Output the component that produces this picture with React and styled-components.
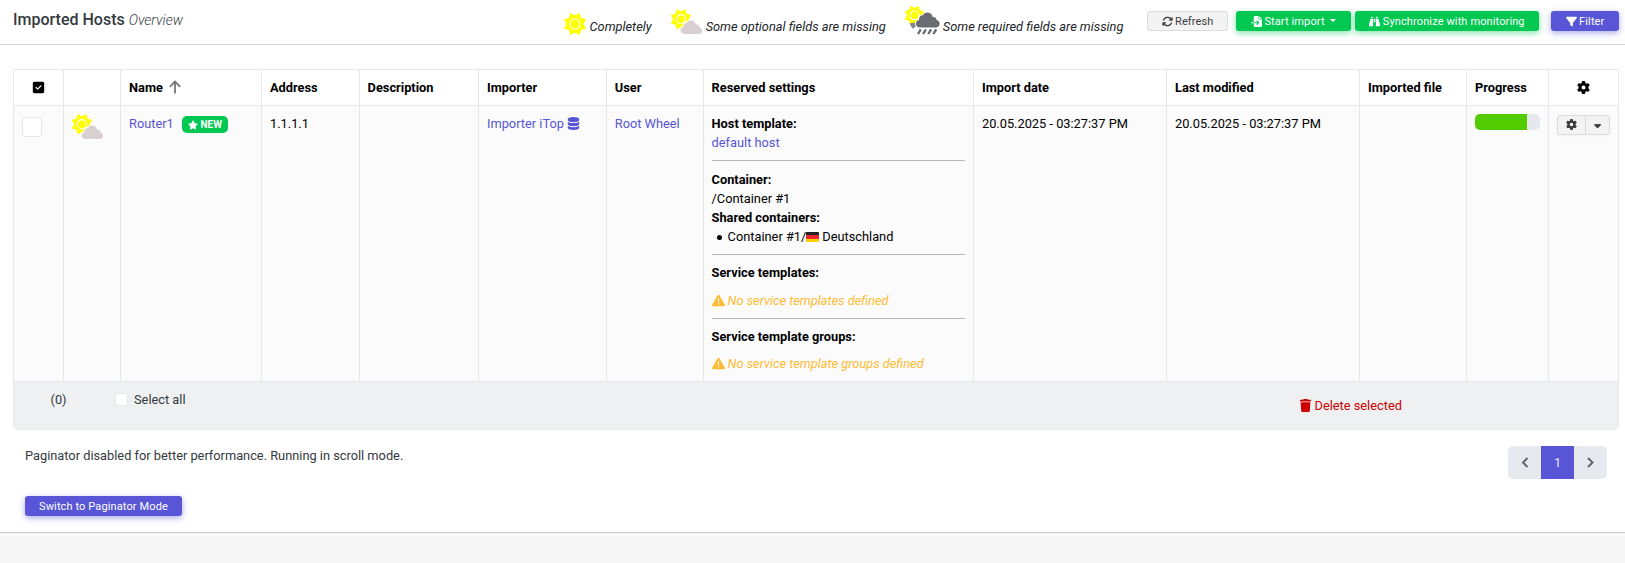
import React from "react";
import styled, { createGlobalStyle, css } from "styled-components";
import {
  FaArrowsRotate, FaFileImport, FaBinoculars, FaFilter, FaGear, FaDatabase,
  FaTrash, FaTriangleExclamation, FaSquareCheck, FaStar, FaCaretDown,
} from "react-icons/fa6";

const GlobalStyle = createGlobalStyle`
  * { box-sizing: border-box; }
  body {
    margin: 0;
    background: #f7f7f7;
    font-family: Roboto, "Liberation Sans", sans-serif;
    font-size: 12.8px;
    line-height: 19px;
    color: #212529;
  }
`;

const Panel = styled.main`
  height: 533px;
  background: #fff;
  border-bottom: 1px solid #c9cacc;
`;

const Header = styled.header`
  display: flex;
  height: 45px;
  padding: 0 6px 0 13px;
  border-bottom: 1px solid #d0d1d3;
`;

const Title = styled.h1`
  flex: 1;
  margin: 9px 0 0;
  font-size: 16px;
  line-height: 21px;
  font-weight: 500;
  color: #343a40;
  small {
    font-size: 14px;
    font-weight: 300;
    font-style: italic;
  }
`;

const Legend = styled.div`
  display: flex;
  align-items: flex-end;
  height: 36px;
  gap: 19px;
  margin-right: 23.6px;
`;

const LegendItem = styled.div`
  display: flex;
  align-items: flex-end;
  gap: 3px;
  font-style: italic;
  color: #212529;
  white-space: nowrap;
  svg { display: block; margin-bottom: 1px; }
`;

const Toolbar = styled.div`
  display: flex;
  margin-top: 11px;
`;

const tones = {
  plain: css`
    background: #f3f3f3;
    color: #3b3b3b;
    border: 1px solid #dcdcdc;
  `,
  green: css`
    background: #00c851;
    color: #fff;
    box-shadow: 0 2px 6px rgba(0, 200, 81, 0.5);
  `,
  violet: css`
    background: #5856d6;
    color: #fff;
    box-shadow: 0 2px 6px rgba(88, 86, 214, 0.5);
  `,
};

const Button = styled.button`
  display: flex;
  align-items: center;
  justify-content: center;
  gap: 2.5px;
  width: ${(p) => p.$width}px;
  height: 20px;
  padding: 1px 0 0;
  margin-left: ${(p) => p.$gap || 0}px;
  border: 0;
  border-radius: 3px;
  font: 400 11px/19px Roboto, sans-serif;
  letter-spacing: 0.12px;
  white-space: nowrap;
  ${(p) => tones[p.$tone]}
  svg { height: 11px; width: auto; flex: none; }
`;

const MiniCaret = styled.i`
  margin-left: 3px;
  margin-top: -2px;
  border: 3px solid transparent;
  border-top-color: currentColor;
  border-bottom: 0;
`;

const Table = styled.section`
  width: 1606px;
  margin: 24px 0 0 13px;
  border: 1px solid #e5e7eb;
  border-radius: 0 0 5px 5px;
  overflow: hidden;
  color: #000;
`;

const Row = styled.div`
  display: grid;
  grid-template-columns: 49px 57px 141px 97.6px 119.4px 127.8px 96.8px 270.4px 193px 193px 107px 82px 70px;
  height: ${(p) => p.$height}px;
  background: ${(p) => (p.$head ? "#fff" : "#fbfbfb")};
  border-bottom: 1px solid #e5e7eb;
  font-weight: ${(p) => (p.$head ? 700 : 400)};
`;

const Cell = styled.div`
  padding: 8px;
  & + & { border-left: 1px solid #e5e7eb; }
  ${(p) => p.$center && css`
    display: flex;
    justify-content: center;
    align-items: center;
  `}
`;

const NameHead = styled.div`
  display: flex;
  gap: 6px;
  svg { margin-top: 2px; }
`;

const Inline = styled.div`
  display: flex;
  align-items: center;
  gap: ${(p) => p.$gap}px;
  white-space: nowrap;
`;

const Link = styled.a`
  color: #5856d6;
`;

const Badge = styled.span`
  display: flex;
  align-items: center;
  justify-content: center;
  gap: 3px;
  width: 46px;
  height: 17px;
  margin-top: 2px;
  border-radius: 5px;
  background: #00c851;
  color: #fff;
  font-size: 10px;
  font-weight: 700;
`;

const Checkbox = styled.span`
  display: block;
  width: ${(p) => p.$size}px;
  height: ${(p) => p.$size}px;
  margin-top: 3px;
  background: #fff;
  border: 1px solid #e5e7eb;
  border-radius: 3px;
`;

const Block = styled.div`
  ${(p) => p.$top && css`
    margin-top: 8px;
    padding-top: ${p.$top}px;
    border-top: 1px solid #b9b9bb;
  `}
`;

const Strong = styled.div`
  font-weight: 700;
`;

const Bullet = styled.div`
  display: flex;
  align-items: center;
  padding-left: 5px;
  &::before {
    content: "";
    width: 5px;
    height: 5px;
    margin: 1px 6px 0 0;
    border-radius: 50%;
    background: #000;
  }
`;

const Flag = styled.i`
  width: 13px;
  height: 10px;
  margin-right: 3px;
  border-radius: 1px;
  background: linear-gradient(#222 0 33%, #e8262c 33% 67%, #ffd000 67%);
`;

const Warning = styled.div`
  display: flex;
  align-items: center;
  gap: 3px;
  margin-top: ${(p) => p.$top}px;
  color: #ffbb33;
  font-style: italic;
  svg { margin-top: -1px; }
`;

const Progress = styled.div`
  width: 65px;
  height: 16px;
  border-radius: 5px;
  overflow: hidden;
  background: #e5e8ed;
`;

const ProgressFill = styled.div`
  width: ${(p) => p.$value}%;
  height: 100%;
  background: #52cc00;
`;

const Split = styled.div`
  display: flex;
  width: 53px;
  height: 20px;
  margin-top: 1px;
  border: 1px solid #dcdcdc;
  border-radius: 3px;
  background: #f3f3f3;
  color: #3b3b3b;
  box-shadow: 0 1px 3px rgba(0, 0, 0, 0.04);
  span {
    flex: 1;
    display: flex;
    align-items: center;
    justify-content: center;
  }
  span:first-child {
    flex: 0 0 28px;
    padding-bottom: 1px;
    border-right: 1px solid #dcdcdc;
  }
`;

const BulkBar = styled.div`
  display: flex;
  height: 47px;
  background: #eff0f2;
  color: #343a40;
`;

const BulkCount = styled.span`
  width: 101px;
  padding: 8px 0 0 36.5px;
`;

const BulkSelect = styled.div`
  display: flex;
  gap: 6px;
  width: 1184px;
  padding-top: 8px;
`;

const BulkDelete = styled.div`
  display: flex;
  gap: 2.5px;
  padding-top: 14px;
  color: #cc0000;
  svg { margin-top: 3px; }
`;

const Footer = styled.footer`
  display: flex;
  justify-content: space-between;
  padding: 16px 18px 0 25px;
`;

const Notice = styled.p`
  margin: 0 0 31px;
  color: #343a40;
`;

const Pager = styled.nav`
  display: flex;
  height: 33px;
  border-radius: 5px;
  overflow: hidden;
`;

const Page = styled.span`
  display: flex;
  align-items: center;
  justify-content: center;
  width: 33px;
  background: ${(p) => (p.$active ? "#5856d6" : "#e6e9ed")};
  color: ${(p) => (p.$active ? "#e6e6ff" : "#666")};
`;

const PagerMode = styled.div`
  white-space: nowrap;
`;

const rayPoints = (cx, cy, outer, inner) =>
  Array.from({ length: 16 }, (_, i) => {
    const r = i % 2 ? inner : outer;
    const a = (Math.PI * (i + 1)) / 8;
    return `${(cx + r * Math.sin(a)).toFixed(2)},${(cy - r * Math.cos(a)).toFixed(2)}`;
  }).join(" ");

const SunShape = ({ cx, cy, r }) => (
  <>
    <polygon points={rayPoints(cx, cy, r, r * 0.7)} fill="#ffff00" stroke="#ffff00" strokeWidth="0.6" strokeLinejoin="round" />
    <circle cx={cx} cy={cy} r={r * 0.43} fill="none" stroke="#fff" strokeWidth="1.1" />
  </>
);

const cloud =
  "M4.2 14 C1.7 14 0.3 12.5 0.3 10.6 C0.3 8.8 1.5 7.6 3.1 7.3 C2.9 4.6 4.6 2.9 6.6 3 C7.6 1.1 9.2 0.4 11 0.5 C13.6 0.6 15.3 2.4 15.5 4.6 C17.6 4.3 19 5.5 19 7.2 C20.8 7.5 21.8 8.8 21.8 10.6 C21.8 12.7 20.4 14 18.4 14 Z";

const Sun = () => (
  <svg width="22.5" height="22" viewBox="0 0 22.5 22"><SunShape cx={11} cy={11} r={11.7} /></svg>
);

const SunCloud = () => (
  <svg width="32" height="26" viewBox="0 0 32 26">
    <SunShape cx={9.9} cy={10.2} r={10.6} />
    <g transform="translate(9.3 11)">
      <path d={cloud} fill="#d8d0d0" stroke="#fff" strokeWidth="2" paintOrder="stroke" />
    </g>
  </svg>
);

const SunRain = () => (
  <svg width="35" height="29" viewBox="0 0 35 29">
    <SunShape cx={9.4} cy={9.4} r={10.2} />
    <path d="M4.5 17.5 L9.5 16.5 L11 20.5 L7.5 22.8 Z" fill="#85868a" />
    <g transform="translate(10.6 6) scale(1.1)">
      <path d={cloud} fill="#6b6c71" stroke="#fff" strokeWidth="1.6" paintOrder="stroke" />
    </g>
    <path d="M15.8 23.4 L13 28 M20.9 23.4 L18.1 28 M26.1 23.4 L23.3 28 M31.2 23.4 L28.4 28" stroke="#6b6c71" strokeWidth="2.4" />
  </svg>
);

const SortArrow = () => (
  <svg width="12" height="14" viewBox="0 0 12 14" fill="none" stroke="#777" strokeWidth="1.8">
    <path d="M6 13.5 V1.5 M0.8 6.8 L6 1.6 L11.2 6.8" />
  </svg>
);

const Chevron = ({ right }) => (
  <svg width="8" height="11" viewBox="0 0 8 11" fill="none" stroke="currentColor" strokeWidth="2">
    <path d={right ? "M1 1 L5.5 5.5 L1 10" : "M6.5 1 L2 5.5 L6.5 10"} />
  </svg>
);

export default function App() {
  return (
    <>
      <GlobalStyle />
      <Panel>
        <Header>
          <Title>Imported Hosts <small>Overview</small></Title>
          <Legend>
            <LegendItem><Sun />Completely</LegendItem>
            <LegendItem><SunCloud />Some optional fields are missing</LegendItem>
            <LegendItem><SunRain />Some required fields are missing</LegendItem>
          </Legend>
          <Toolbar>
            <Button $tone="plain" $width={81}><FaArrowsRotate />Refresh</Button>
            <Button $tone="green" $width={115} $gap={8}><FaFileImport />Start import<MiniCaret /></Button>
            <Button $tone="green" $width={184} $gap={4}><FaBinoculars />Synchronize with monitoring</Button>
            <Button $tone="violet" $width={68} $gap={12}><FaFilter />Filter</Button>
          </Toolbar>
        </Header>

        <Table>
          <Row $head $height={36}>
            <Cell $center><FaSquareCheck size={13} /></Cell>
            <Cell />
            <Cell><NameHead>Name<SortArrow /></NameHead></Cell>
            <Cell>Address</Cell>
            <Cell>Description</Cell>
            <Cell>Importer</Cell>
            <Cell>User</Cell>
            <Cell>Reserved settings</Cell>
            <Cell>Import date</Cell>
            <Cell>Last modified</Cell>
            <Cell>Imported file</Cell>
            <Cell>Progress</Cell>
            <Cell $center><FaGear size={13} /></Cell>
          </Row>
          <Row $height={276}>
            <Cell><Checkbox $size={20} /></Cell>
            <Cell><SunCloud /></Cell>
            <Cell><Inline $gap={8}><Link>Router1</Link><Badge><FaStar size={10} />NEW</Badge></Inline></Cell>
            <Cell>1.1.1.1</Cell>
            <Cell />
            <Cell><Link><Inline $gap={3}>Importer iTop<FaDatabase size={13} /></Inline></Link></Cell>
            <Cell><Link>Root Wheel</Link></Cell>
            <Cell>
              <Block>
                <Strong>Host template:</Strong>
                <Link>default host</Link>
              </Block>
              <Block $top={9}>
                <Strong>Container:</Strong>
                <div>/Container #1</div>
                <Strong>Shared containers:</Strong>
                <Bullet>Container #1/<Flag />Deutschland</Bullet>
              </Block>
              <Block $top={8}>
                <Strong>Service templates:</Strong>
                <Warning $top={9}><FaTriangleExclamation size={13} />No service templates defined</Warning>
              </Block>
              <Block $top={8}>
                <Strong>Service template groups:</Strong>
                <Warning $top={8}><FaTriangleExclamation size={13} />No service template groups defined</Warning>
              </Block>
            </Cell>
            <Cell>20.05.2025 - 03:27:37 PM</Cell>
            <Cell>20.05.2025 - 03:27:37 PM</Cell>
            <Cell />
            <Cell><Progress><ProgressFill $value={80} /></Progress></Cell>
            <Cell>
              <Split>
                <span><FaGear size={11} /></span>
                <span><FaCaretDown size={11} /></span>
              </Split>
            </Cell>
          </Row>
          <BulkBar>
            <BulkCount>(0)</BulkCount>
            <BulkSelect><Checkbox $size={13} />Select all</BulkSelect>
            <BulkDelete><FaTrash size={13} />Delete selected</BulkDelete>
          </BulkBar>
        </Table>

        <Footer>
          <PagerMode>
            <Notice>Paginator disabled for better performance. Running in scroll mode.</Notice>
            <Button $tone="violet" $width={157}>Switch to Paginator Mode</Button>
          </PagerMode>
          <Pager>
            <Page><Chevron /></Page>
            <Page $active>1</Page>
            <Page><Chevron right /></Page>
          </Pager>
        </Footer>
      </Panel>
    </>
  );
}
